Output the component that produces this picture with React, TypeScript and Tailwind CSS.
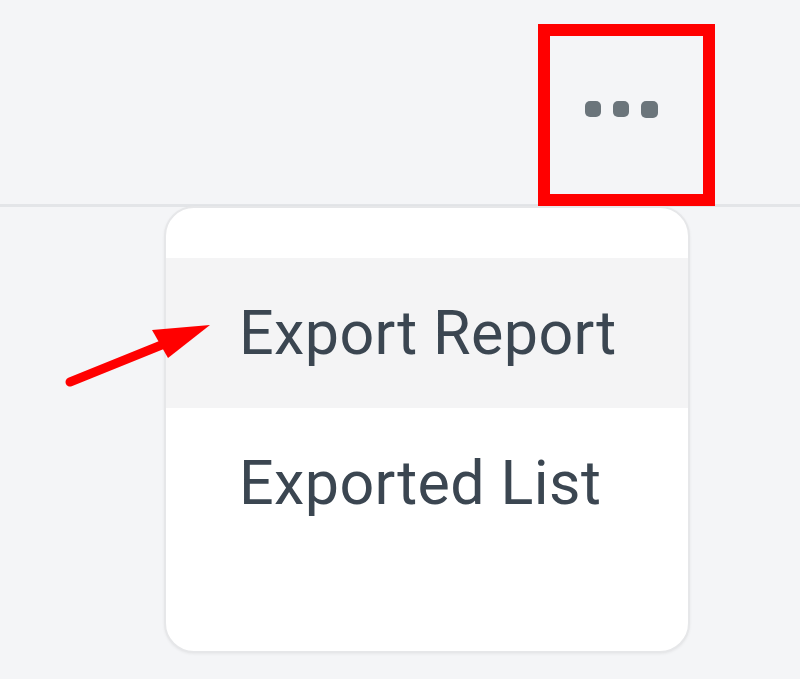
function RedArrow() {
  return (
    <svg className="absolute left-[64px] top-[318px]" width="152" height="72" viewBox="0 0 152 72">
      <path d="M6 64 L100 26" stroke="#ff0000" strokeWidth="9" strokeLinecap="round" />
      <path d="M146 7 L88 12 L104 40 Z" fill="#ff0000" />
    </svg>
  )
}

export default function App() {
  const items = ['Export Report', 'Exported List']
  return (
    <div className="relative w-[800px] h-[679px] bg-[#f4f5f7] overflow-hidden" style={{ fontFamily: 'Roboto, "Liberation Sans", sans-serif' }}>
      {/* top bar */}
      <div className="h-[207px] border-b-[3px] border-[#e3e5e8] flex justify-end items-start pt-[24px] pr-[85px]">
        <button className="w-[177px] h-[182px] border-[12px] border-[#ff0000] flex items-center justify-center gap-[12px] pb-[12px] pr-[10px]">
          <span className="w-[16px] h-[16px] rounded-[5px] bg-[#6b757b]" />
          <span className="w-[16px] h-[16px] rounded-[5px] bg-[#6b757b]" />
          <span className="w-[17px] h-[17px] rounded-[5px] bg-[#6b757b]" />
        </button>
      </div>

      {/* dropdown */}
      <div className="absolute left-[164px] top-[206px] w-[526px] h-[447px] bg-white rounded-[30px] border-2 border-[#e6e7e9] shadow-[0_1px_3px_rgba(0,0,0,0.06)] overflow-hidden pt-[50px]">
        {items.map((label, i) => (
          <div key={label}
            className={`h-[150px] flex items-center pl-[73px] text-[61px] tracking-[0.4px] leading-none text-[#3b4651] ${i === 0 ? 'bg-[#f4f4f5]' : ''}`}>
            {label}
          </div>
        ))}
      </div>

      <RedArrow />
    </div>
  )
}
